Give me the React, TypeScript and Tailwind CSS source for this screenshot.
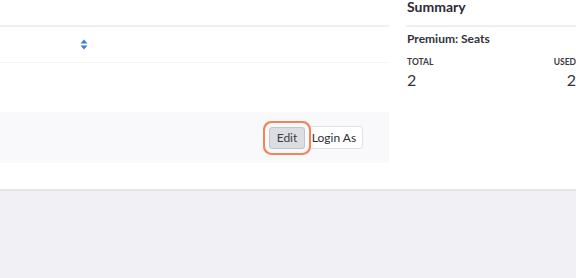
export default function App() {
  return (
    <div className="w-[576px] h-[278px] bg-[#f1f1f5] overflow-hidden" style={{ fontFamily: 'Lato, "Liberation Sans", sans-serif' }}>
      <div className="h-[191px] bg-white border-b-2 border-[#e4e4e8] flex">
        <div className="w-[389px] flex flex-col">
          <div className="h-[27px] border-b-2 border-[#efeff1]" />
          <div className="h-[36px] border-b border-[#f3f3f5] flex items-center pl-[80px]">
            <svg width="8" height="11" viewBox="0 0 8 11">
              <path d="M4 0.5 L7.5 4.5 H0.5 Z" fill="#3b7ddd" />
              <path d="M4 10.5 L7.5 6.5 H0.5 Z" fill="#3b7ddd" />
            </svg>
          </div>
          <div className="h-[49px]" />
          <div className="h-[51px] bg-[#f9f9fb] flex items-center justify-end pr-[26px]">
            <button className="h-[22px] w-[36px] rounded-[3px] bg-[#dcdde2] border border-[#c3c4ca] text-[12px] text-[#3c3c44] leading-none ring-2 ring-[#f3845a] ring-offset-4 ring-offset-[#f9f9fb] relative z-10">
              Edit
            </button>
            <button className="h-[23px] w-[58px] rounded-r-[3px] bg-white border border-[#e2e2e6] text-[12px] text-[#2e2e36] leading-none">
              Login As
            </button>
          </div>
        </div>
        <div className="flex-1 ml-[17px]">
          <div className="h-[27px] border-b-2 border-[#efeff1] pl-[1px]">
            <div className="text-[14px] font-bold text-[#2c2c34] leading-[14px]">Summary</div>
          </div>
          <div className="pt-[5px] pl-[1px] text-[12px] font-bold text-[#33333b] leading-[14px]">Premium: Seats</div>
          <div className="mt-[11px] flex justify-between text-[8.5px] font-bold text-[#3a3a42] uppercase leading-[10px] pl-[1px]">
            <span>Total</span>
            <span>Used</span>
          </div>
          <div className="mt-[4px] flex justify-between text-[16px] text-[#33333b] leading-[18px] pl-[1px]">
            <span>2</span>
            <span>2</span>
          </div>
        </div>
      </div>
    </div>
  );
}
